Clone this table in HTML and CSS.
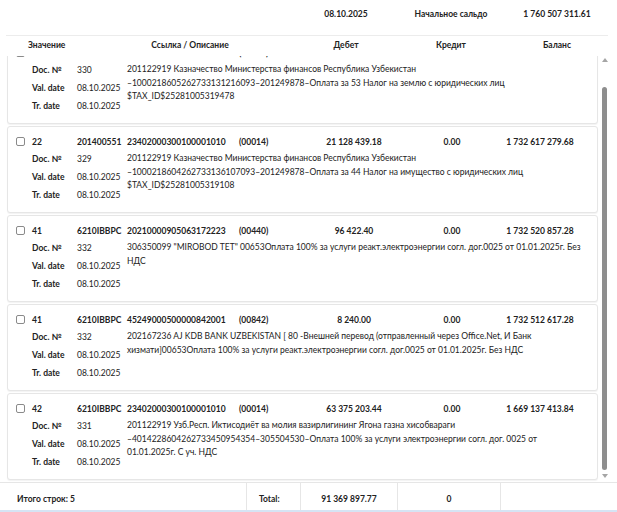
FILE: index.html
```html
<!DOCTYPE html>
<html lang="ru">
<head>
<meta charset="utf-8">
<title>Выписка</title>
<link rel="stylesheet" href="styles.css">
</head>
<body>
<div class="page">
  <div class="summary cols">
    <span class="c-deb">08.10.2025</span>
    <span class="c-cre">Начальное сальдо</span>
    <span class="c-bal">1 760 507 311.61</span>
  </div>
  <div class="colhead cols">
    <span class="h-val">Значение</span>
    <span class="h-ref">Ссылка / Описание</span>
    <span class="c-deb">Дебет</span>
    <span class="c-cre">Кредит</span>
    <span class="c-bal">Баланс</span>
  </div>
  <div class="viewport">
    <div class="list">
      <div class="card">
        <span class="cb"></span><b>22</b><b>201400551</b><b>23402000300100001010</b><b>(00014)</b><b class="num">6 761 592.75</b><b class="num">0.00</b><b class="num">1 753 745 718.86</b>
        <b class="lbl r1">Doc. №</b><span class="val r1">330</span>
        <b class="lbl r2">Val. date</b><span class="val r2">08.10.2025</span>
        <b class="lbl r3">Tr. date</b><span class="val r3">08.10.2025</span>
        <p class="desc">201122919 Казначество Министерства финансов Республика Узбекистан<br>–1000218605262733131216093–201249878–Оплата за 53 Налог на землю с юридических лиц<br>$TAX_ID$25281005319478</p>
      </div>
      <div class="card">
        <span class="cb"></span><b>22</b><b>201400551</b><b>23402000300100001010</b><b>(00014)</b><b class="num">21 128 439.18</b><b class="num">0.00</b><b class="num">1 732 617 279.68</b>
        <b class="lbl r1">Doc. №</b><span class="val r1">329</span>
        <b class="lbl r2">Val. date</b><span class="val r2">08.10.2025</span>
        <b class="lbl r3">Tr. date</b><span class="val r3">08.10.2025</span>
        <p class="desc">201122919 Казначество Министерства финансов Республика Узбекистан<br>–1000218604262733136107093–201249878–Оплата за 44 Налог на имущество с юридических лиц<br>$TAX_ID$25281005319108</p>
      </div>
      <div class="card">
        <span class="cb"></span><b>41</b><b>6210IBBPC</b><b>20210000905063172223</b><b>(00440)</b><b class="num">96 422.40</b><b class="num">0.00</b><b class="num">1 732 520 857.28</b>
        <b class="lbl r1">Doc. №</b><span class="val r1">332</span>
        <b class="lbl r2">Val. date</b><span class="val r2">08.10.2025</span>
        <b class="lbl r3">Tr. date</b><span class="val r3">08.10.2025</span>
        <p class="desc">306350099 "MIROBOD TET" 00653Оплата 100% за услуги реакт.электроэнергии согл. дог.0025 от 01.01.2025г. Без<br>НДС</p>
      </div>
      <div class="card">
        <span class="cb"></span><b>41</b><b>6210IBBPC</b><b>45249000500000842001</b><b>(00842)</b><b class="num">8 240.00</b><b class="num">0.00</b><b class="num">1 732 512 617.28</b>
        <b class="lbl r1">Doc. №</b><span class="val r1">332</span>
        <b class="lbl r2">Val. date</b><span class="val r2">08.10.2025</span>
        <b class="lbl r3">Tr. date</b><span class="val r3">08.10.2025</span>
        <p class="desc">202167236 AJ KDB BANK UZBEKISTAN [ 80 -Внешней перевод (отправленный через Office.Net, И Банк<br>хизмати]00653Оплата 100% за услуги реакт.электроэнергии согл. дог.0025 от 01.01.2025г. Без НДС</p>
      </div>
      <div class="card">
        <span class="cb"></span><b>42</b><b>6210IBBPC</b><b>23402000300100001010</b><b>(00014)</b><b class="num">63 375 203.44</b><b class="num">0.00</b><b class="num">1 669 137 413.84</b>
        <b class="lbl r1">Doc. №</b><span class="val r1">331</span>
        <b class="lbl r2">Val. date</b><span class="val r2">08.10.2025</span>
        <b class="lbl r3">Tr. date</b><span class="val r3">08.10.2025</span>
        <p class="desc">201122919 Узб.Респ. Иктисодиёт ва молия вазирлигининг Ягона газна хисобвараги<br>–4014228604262733450954354–305504530–Оплата 100% за услуги электроэнергии согл. дог. 0025 от<br>01.01.2025г. С уч. НДС</p>
      </div>
    </div>
    <div class="scrollbar">
      <span class="arr up"></span>
      <div class="track"><div class="thumb"></div></div>
      <span class="arr down"></span>
    </div>
  </div>
  <div class="footer">
    <div class="f-cell f-count">Итого строк: 5</div>
    <div class="f-cell f-total">Total:</div>
    <div class="f-cell f-num">91 369 897.77</div>
    <div class="f-cell f-num">0</div>
    <div class="f-cell f-last"></div>
  </div>
</div>
</body>
</html>
```
FILE: styles.css
```css
* { box-sizing: border-box; }
html, body { margin: 0; padding: 0; background: #fff; }
body {
  font-family: Lato, "Liberation Sans", sans-serif;
  font-size: 8.5px;
  color: #222;
}
b { font-weight: 700; }
.page { width: 617px; height: 512px; display: flex; flex-direction: column; }

.cols {
  display: grid;
  grid-template-columns: 99px 126px 43px 100px 110px 102px;
  padding-left: 28px;
  align-items: center;
}
.c-deb { grid-column: 4; text-align: center; }
.c-cre { grid-column: 5; text-align: center; }
.c-bal { grid-column: 6; text-align: center; }

.summary {
  flex: none;
  height: 36px;
  margin: 0 9px 0 6px;
  padding-left: 22px;
  padding-bottom: 8px;
  border-bottom: 1px solid #ececec;
  font-weight: 700;
}
.colhead {
  flex: none;
  height: 20px;
  font-weight: 700;
  padding-bottom: 2px;
}
.h-val { grid-column: 1; }
.h-ref { grid-column: 2; text-align: center; }

.viewport {
  flex: none;
  height: 426px;
  display: flex;
}
.list {
  flex: 1;
  overflow: hidden;
  display: flex;
  flex-direction: column;
  justify-content: flex-end;
  gap: 2px;
  padding: 0 1px 2px 7px;
}
.card {
  flex: none;
  display: grid;
  grid-template-columns: 16px 45px 50px 112px 71px 88px 108px 68px 1fr;
  grid-template-rows: 17px 18px 18px 18px;
  align-items: center;
  height: 87px;
  padding: 6px 0 8px 8px;
  background: #fff;
  border: 1px solid #e6e6e6;
  border-radius: 3px;
  box-shadow: 0 1px 1px rgba(0, 0, 0, 0.05);
  color: #222;
}
.card > b { white-space: nowrap; }
.cb {
  width: 9px;
  height: 9px;
  border: 1px solid #8a8a8a;
  border-radius: 2px;
  background: #fff;
}
.num { text-align: center; }
.lbl { grid-column: 2; }
.val { grid-column: 3; }
.r1 { grid-row: 2; }
.r2 { grid-row: 3; }
.r3 { grid-row: 4; }
.desc {
  grid-column: 4 / -1;
  grid-row: 2 / 5;
  align-self: start;
  margin: 2px 0 0;
  line-height: 13.5px;
  white-space: nowrap;
}

.scrollbar {
  width: 11px;
  margin-right: 7px;
  display: flex;
  flex-direction: column;
  align-items: center;
}
.arr {
  width: 0;
  height: 0;
  border-left: 3px solid transparent;
  border-right: 3px solid transparent;
}
.arr.up { border-bottom: 4px solid #a5a5a5; margin: 2px 0 8px; }
.arr.down { border-top: 4px solid #a5a5a5; margin: 4px 0 4px; }
.track {
  flex: 1;
  width: 100%;
  display: flex;
  flex-direction: column;
  justify-content: flex-end;
  align-items: center;
}
.thumb {
  width: 5px;
  height: 383px;
  border-radius: 3px;
  background: #8e8e8e;
}

.footer {
  flex: none;
  height: 30px;
  display: grid;
  grid-template-columns: 247px 54px 97px 103px 1fr;
  border-top: 1px solid #e6e6e6;
  border-bottom: 2px solid #d6e4f4;
  font-weight: 700;
}
.f-cell {
  display: flex;
  align-items: center;
  padding-top: 4px;
  border-right: 1px solid #e6e6e6;
}
.f-count { padding-left: 17px; }
.f-total { padding-left: 12px; }
.f-num { justify-content: center; }
.f-last { border-right: none; }
```
